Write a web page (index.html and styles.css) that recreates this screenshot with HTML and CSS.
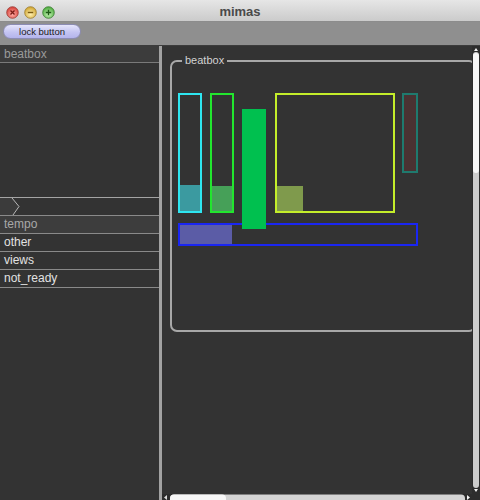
FILE: index.html
```html
<!DOCTYPE html>
<html>
<head>
<meta charset="utf-8">
<title>mimas</title>
<link rel="stylesheet" href="styles.css">
</head>
<body>
<div class="window">
  <div class="titlebar">
    <div class="lights">
      <svg class="light" width="13" height="13" viewBox="0 0 13 13">
        <defs>
          <radialGradient id="gr" cx="50%" cy="65%" r="60%">
            <stop offset="0" stop-color="#ffb0a8"/>
            <stop offset="1" stop-color="#d8443c"/>
          </radialGradient>
          <radialGradient id="gy" cx="50%" cy="65%" r="60%">
            <stop offset="0" stop-color="#fff0b0"/>
            <stop offset="1" stop-color="#d2a834"/>
          </radialGradient>
          <radialGradient id="gg" cx="50%" cy="65%" r="60%">
            <stop offset="0" stop-color="#c8f4b8"/>
            <stop offset="1" stop-color="#4fae40"/>
          </radialGradient>
        </defs>
        <circle cx="6.5" cy="6.5" r="5.8" fill="url(#gr)" stroke="#9a3a34" stroke-width="0.8"/>
        <path d="M4.5 4.5 L8.5 8.5 M8.5 4.5 L4.5 8.5" stroke="#7a1a14" stroke-width="1.3"/>
      </svg>
      <svg class="light" width="13" height="13" viewBox="0 0 13 13">
        <circle cx="6.5" cy="6.5" r="5.8" fill="url(#gy)" stroke="#9a7a2a" stroke-width="0.8"/>
        <path d="M3.8 6.5 L9.2 6.5" stroke="#7a5a10" stroke-width="1.4"/>
      </svg>
      <svg class="light" width="13" height="13" viewBox="0 0 13 13">
        <circle cx="6.5" cy="6.5" r="5.8" fill="url(#gg)" stroke="#3a7a30" stroke-width="0.8"/>
        <path d="M3.8 6.5 L9.2 6.5 M6.5 3.8 L6.5 9.2" stroke="#1e5a16" stroke-width="1.4"/>
      </svg>
    </div>
    <div class="title">mimas</div>
    <div></div>
  </div>

  <div class="toolbar">
    <button class="lock">lock button</button>
  </div>

  <div class="main">
    <div class="left">
      <div class="lhead">beatbox</div>
      <div class="lspacer"></div>
      <div class="lrow tabrow">
        <svg width="24" height="17" viewBox="0 0 24 17">
          <polygon points="0,0 12,0 19,8.5 13,17 0,17" fill="#3b3b3b"/>
          <polyline points="12,0 19,8.5 13,17" fill="none" stroke="#b8b8b8" stroke-width="1"/>
        </svg>
      </div>
      <div class="lrow sel">tempo</div>
      <div class="lrow">other</div>
      <div class="lrow">views</div>
      <div class="lrow">not_ready</div>
    </div>

    <div class="right">
      <div class="viewport">
        <div class="group">
          <span class="legend">beatbox</span>
          <div class="w w-cyan"><div class="fill fill-cyan"></div></div>
          <div class="w w-green"><div class="fill fill-green"></div></div>
          <div class="w w-yellow"><div class="fill fill-yellow"></div></div>
          <div class="w w-teal"></div>
          <div class="w w-blue"><div class="fill fill-blue"></div></div>
          <div class="w w-solid"></div>
        </div>
      </div>
      <div class="vscroll">
        <svg width="8" height="448" viewBox="0 0 8 448">
          <rect x="0" y="0" width="8" height="448" fill="#2d2d2d"/>
          <polygon points="4,2 2,5 6,5" fill="#f4f4f4"/>
          <rect x="1" y="6" width="6" height="436" rx="3" fill="#cdcdcd"/>
          <rect x="1" y="7" width="6" height="120" rx="3" fill="#f8f8f8"/>
          <polygon points="2,443 6,443 4,446" fill="#f4f4f4"/>
        </svg>
      </div>
      <div class="hscroll">
        <svg width="310" height="6" viewBox="0 0 310 6">
          <rect x="0" y="0" width="310" height="6" fill="#2d2d2d"/>
          <polygon points="2,3.5 5,1 5,6" fill="#dcdcdc"/>
          <rect x="8" y="0.5" width="295" height="10" rx="4" fill="#d4d4d4"/>
          <rect x="8" y="0.5" width="56" height="10" rx="4" fill="#f8f8f8"/>
          <polygon points="305,1 308,3.5 305,6" fill="#f4f4f4"/>
        </svg>
      </div>
      <div class="corner"></div>
    </div>
  </div>
</div>
</body>
</html>
```

FILE: styles.css
```css
html, body {
  margin: 0;
  padding: 0;
  background: #333333;
}
body {
  width: 480px;
  height: 500px;
  overflow: hidden;
  font-family: "Liberation Sans", Arial, sans-serif;
}
.window {
  display: flex;
  flex-direction: column;
  width: 480px;
  height: 500px;
}
.titlebar {
  height: 21px;
  border-bottom: 1px solid #8c8c8c;
  background: linear-gradient(#e6e6e6, #cbcbcb);
  display: grid;
  grid-template-columns: 1fr auto 1fr;
  align-items: center;
}
.lights {
  display: flex;
  gap: 5px;
  padding-left: 6px;
  padding-top: 2px;
}
.light {
  display: block;
}
.title {
  font-size: 13px;
  font-weight: bold;
  color: #4a4a4a;
  line-height: 21px;
  padding-top: 1px;
}
.toolbar {
  height: 23px;
  background: #8f8f8f;
  border-bottom: 1px solid #3c3c3c;
  box-sizing: content-box;
}
.lock {
  display: block;
  margin: 2px 0 0 3px;
  width: 78px;
  height: 15px;
  padding: 0;
  border: 1px solid #8c8cb4;
  border-radius: 8px;
  background: linear-gradient(#e6e6fb, #c4c4f2 55%, #b4b4ec);
  font-family: "Liberation Sans", Arial, sans-serif;
  font-size: 9.5px;
  color: #1a1a1a;
  line-height: 13px;
  text-align: center;
}
.main {
  flex: 1;
  display: flex;
  min-height: 0;
}
.left {
  width: 159px;
  background: #333333;
  display: flex;
  flex-direction: column;
}
.lhead {
  height: 16px;
  line-height: 16px;
  background: #3c3c3c;
  border-bottom: 1px solid #7a7a7a;
  padding-left: 4px;
  font-size: 12px;
  color: #9a9a9a;
}
.lspacer {
  height: 134px;
}
.lrow {
  height: 17px;
  line-height: 17px;
  border-bottom: 1px solid #8a8a8a;
  padding-left: 4px;
  font-size: 12px;
  color: #e2e2e2;
}
.tabrow {
  border-top: 1px solid #a4a4a4;
  padding-left: 0;
}
.tabrow svg {
  display: block;
}
.sel {
  background: #3d3d3d;
  color: #a8a8a8;
}
.right {
  flex: 1;
  border-left: 3px solid #a2a2a2;
  display: grid;
  grid-template-columns: 1fr 8px;
  grid-template-rows: 1fr 6px;
  min-width: 0;
}
.viewport {
  position: relative;
  overflow: hidden;
  background: #333333;
}
.vscroll svg, .hscroll svg {
  display: block;
}
.vscroll, .hscroll, .corner {
  background: #2d2d2d;
  overflow: hidden;
}
.group {
  position: relative;
  margin: 14px 0 0 8px;
  width: 306px;
  height: 272px;
  box-sizing: border-box;
  border: 2px solid #a8a8a8;
  border-radius: 7px;
}
.legend {
  position: absolute;
  top: -9px;
  left: 10px;
  padding: 0 3px;
  background: #333333;
  font-size: 11px;
  line-height: 14px;
  color: #d2d2d2;
}
.w {
  position: absolute;
  box-sizing: border-box;
  border: 2px solid;
}
.fill {
  position: absolute;
  bottom: 0;
  left: 0;
}
.w-cyan {
  left: 6px; top: 31px; width: 24px; height: 120px;
  border-color: #2ee6f0;
}
.fill-cyan {
  right: 0; height: 26px;
  background: #3b9aa0;
}
.w-green {
  left: 38px; top: 31px; width: 24px; height: 120px;
  border-color: #22e62e;
}
.fill-green {
  right: 0; height: 25px;
  background: #46a058;
}
.w-solid {
  left: 70px; top: 47px; width: 24px; height: 120px;
  border: none;
  background: #00c04f;
}
.w-yellow {
  left: 103px; top: 31px; width: 120px; height: 120px;
  border-color: #c4ee2a;
}
.fill-yellow {
  width: 26px; height: 25px;
  background: #7f9a4c;
}
.w-teal {
  left: 230px; top: 31px; width: 16px; height: 80px;
  border-color: #1f7a6e;
  background: #4a3232;
}
.w-blue {
  left: 6px; top: 161px; width: 240px; height: 23px;
  border-color: #1a26f2;
}
.fill-blue {
  top: 0; width: 52px;
  background: #5b5ca6;
}
```
